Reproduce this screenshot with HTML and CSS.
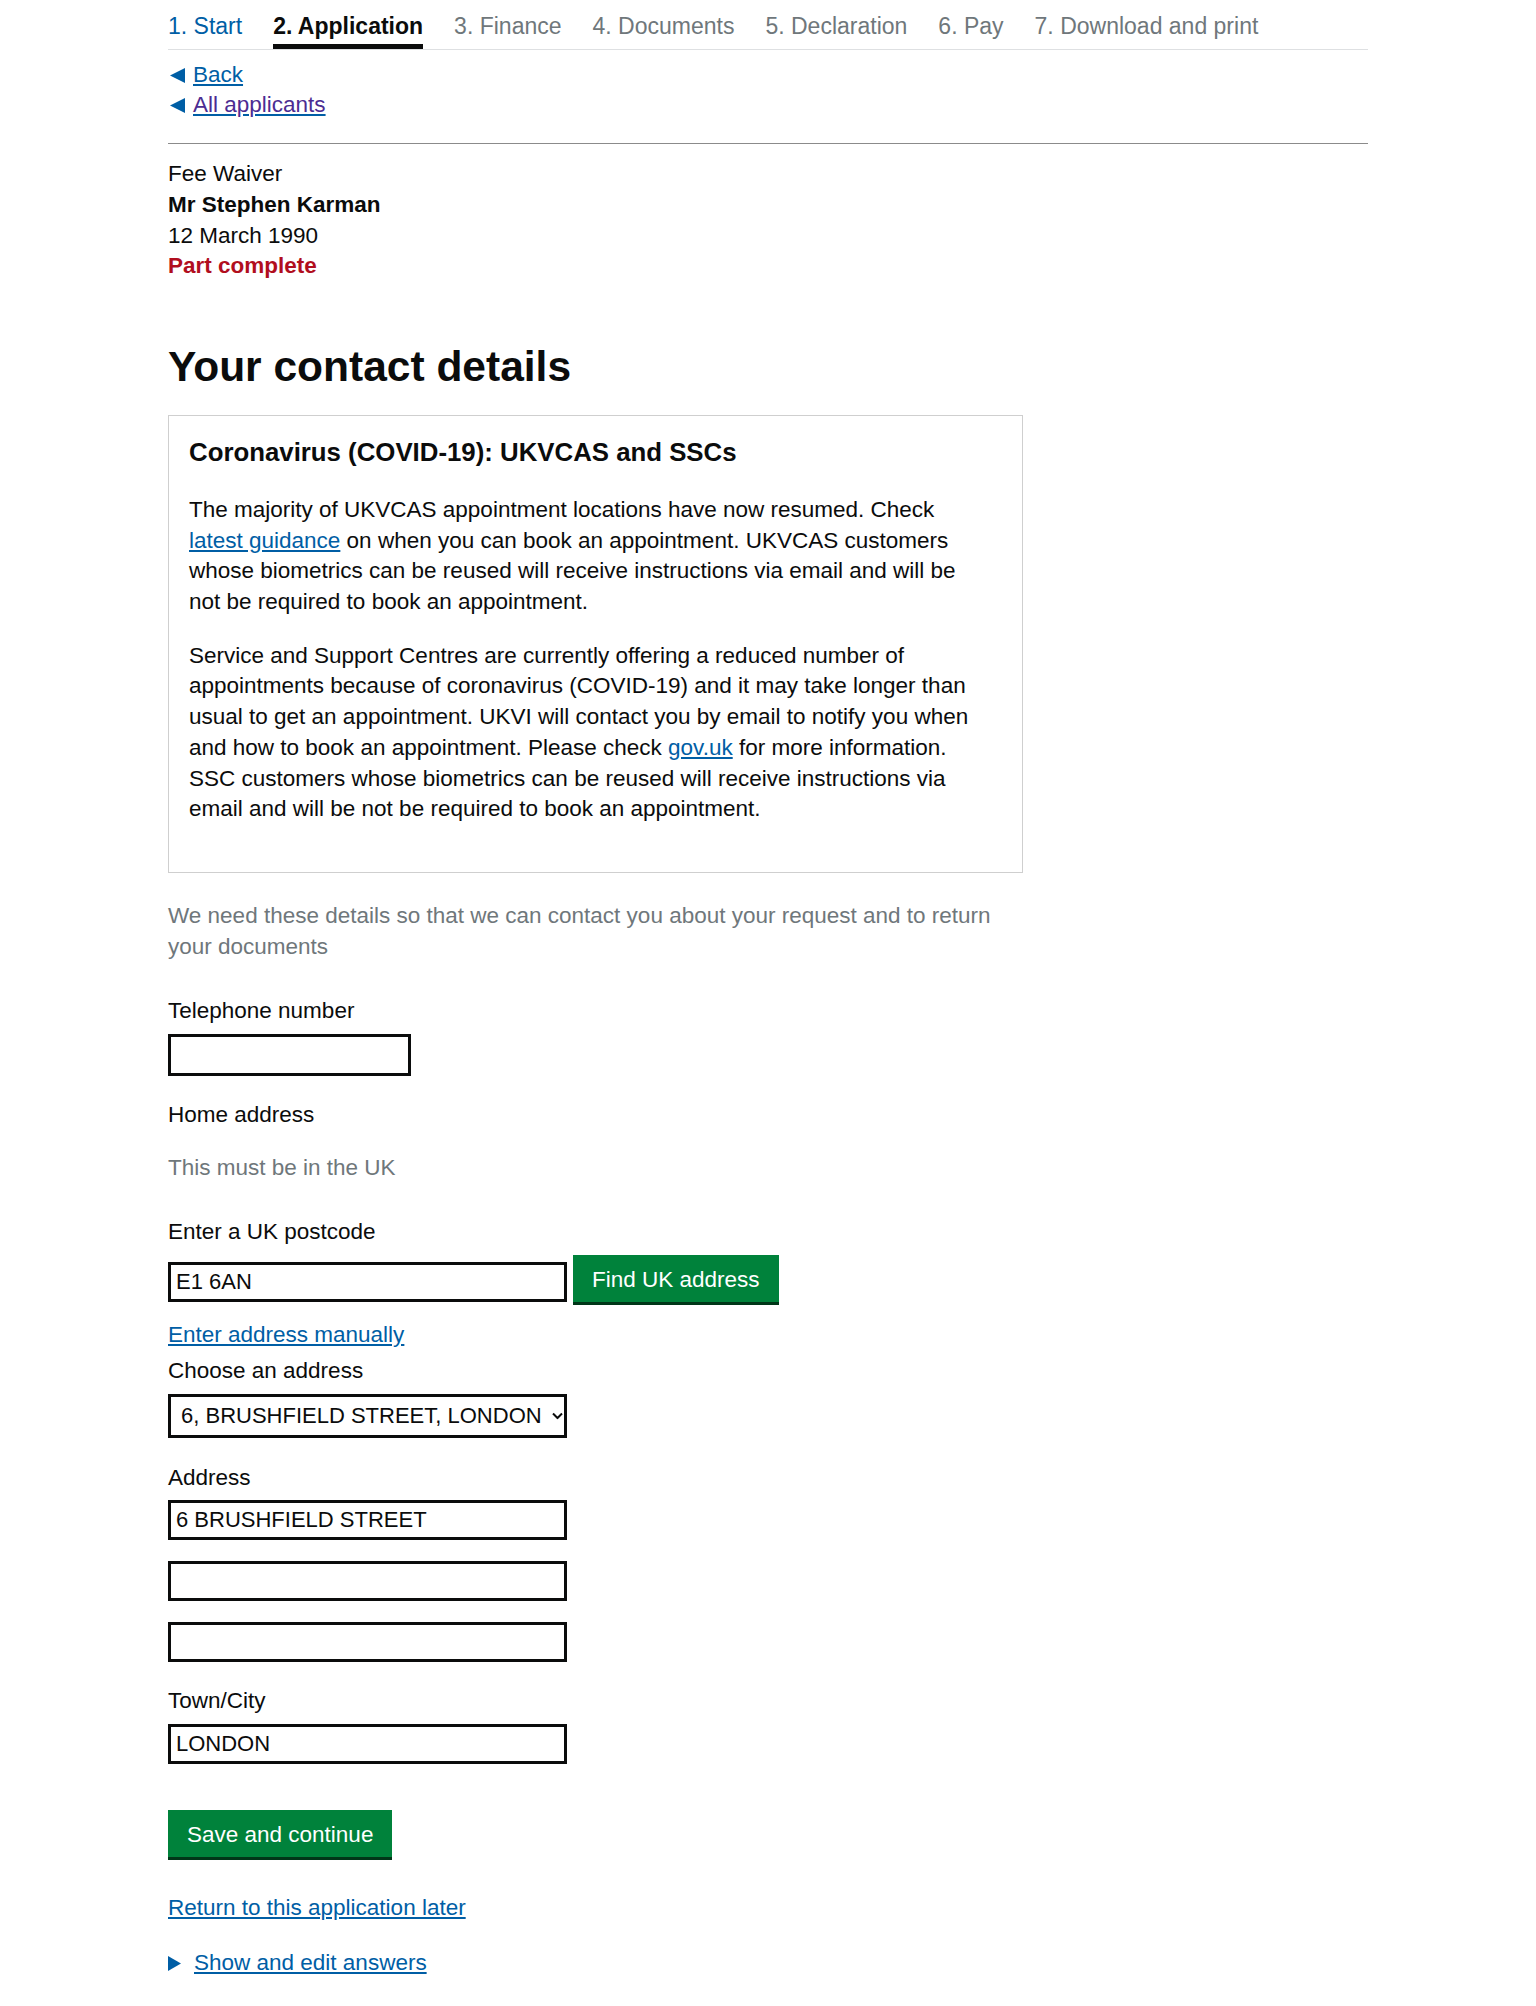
FILE: index.html
```html
<!DOCTYPE html>
<html lang="en">
<head>
    <meta charset="UTF-8">
    <meta name="viewport" content="width=device-width, initial-scale=1.0">
    <title>Your contact details</title>
    <link rel="stylesheet" href="styles.css">
</head>
<body>
    <div class="page">
        <!-- Application steps -->
        <ol class="steps">
            <li class="step"><a href="#">1. Start</a></li>
            <li class="step current">2. Application</li>
            <li class="step">3. Finance</li>
            <li class="step">4. Documents</li>
            <li class="step">5. Declaration</li>
            <li class="step">6. Pay</li>
            <li class="step">7. Download and print</li>
        </ol>

        <div class="back-links">
            <a href="#" class="back-link">
                <svg class="back-arrow" width="15" height="15" viewBox="0 0 15 15"><path d="M0 7.5L15 0V15Z"/></svg>
                <span>Back</span>
            </a>
            <a href="#" class="back-link visited">
                <svg class="back-arrow" width="15" height="15" viewBox="0 0 15 15"><path d="M0 7.5L15 0V15Z"/></svg>
                <span>All applicants</span>
            </a>
        </div>

        <hr class="divider">

        <div class="applicant">
            <div>Fee Waiver</div>
            <div class="applicant-name">Mr Stephen Karman</div>
            <div>12 March 1990</div>
            <div class="status">Part complete</div>
        </div>

        <h1>Your contact details</h1>

        <div class="notice">
            <h2>Coronavirus (COVID-19): UKVCAS and SSCs</h2>
            <p>The majority of UKVCAS appointment locations have now resumed. Check <a href="#">latest guidance</a> on when you can book an appointment. UKVCAS customers whose biometrics can be reused will receive instructions via email and will be not be required to book an appointment.</p>
            <p>Service and Support Centres are currently offering a reduced number of appointments because of coronavirus (COVID-19) and it may take longer than usual to get an appointment. UKVI will contact you by email to notify you when and how to book an appointment. Please check <a href="#">gov.uk</a> for more information. SSC customers whose biometrics can be reused will receive instructions via email and will be not be required to book an appointment.</p>
        </div>

        <p class="intro">We need these details so that we can contact you about your request and to return your documents</p>

        <form class="contact-form">
            <div class="field-phone">
                <label for="phone">Telephone number</label>
                <input type="tel" id="phone" class="input input-phone">
            </div>

            <div class="section-label">Home address</div>
            <p class="hint">This must be in the UK</p>

            <label for="postcode" class="label-postcode">Enter a UK postcode</label>
            <div class="postcode-row">
                <input type="text" id="postcode" class="input input-postcode" value="E1 6AN">
                <button type="button" class="button">Find UK address</button>
            </div>

            <a href="#" class="manual-link">Enter address manually</a>

            <label for="chooseAddress" class="label-choose">Choose an address</label>
            <div class="select-wrap">
                <select id="chooseAddress" class="select">
                    <option>6, BRUSHFIELD STREET, LONDON, E1 6AN</option>
                </select>
                <svg class="chevron" width="11" height="7" viewBox="0 0 11 7"><polyline points="1,1 5.5,5.5 10,1"/></svg>
            </div>

            <label for="address1" class="label-address">Address</label>
            <input type="text" id="address1" class="input input-wide" value="6 BRUSHFIELD STREET">
            <input type="text" id="address2" class="input input-wide input-extra">
            <input type="text" id="address3" class="input input-wide input-extra">

            <label for="town" class="label-town">Town/City</label>
            <input type="text" id="town" class="input input-wide" value="LONDON">

            <button type="submit" class="button button-save">Save and continue</button>
        </form>

        <a href="#" class="later-link">Return to this application later</a>

        <details class="answers">
            <summary>
                <svg class="summary-arrow" width="13" height="15" viewBox="0 0 13 15"><path d="M0 0L13 7.5L0 15Z"/></svg>
                <span>Show and edit answers</span>
            </summary>
        </details>
    </div>
</body>
</html>
```

FILE: styles.css
```css
body {
    margin: 0;
    font-family: "Liberation Sans", Arial, sans-serif;
    font-size: 22.5px;
    line-height: 30.7px;
    color: #0b0c0c;
    background-color: #fff;
}

a {
    color: #005ea5;
}

.page {
    width: 1200px;
    margin: 0 auto;
}

/* steps nav */
.steps {
    list-style: none;
    display: flex;
    gap: 31px;
    margin: 0;
    padding: 0;
    font-size: 23px;
    border-bottom: 1px solid #dee0e2;
}

.step {
    padding: 11px 0 2px;
    border-bottom: 5px solid transparent;
    color: #6f777b;
}

.step a {
    text-decoration: none;
}

.step.current {
    color: #0b0c0c;
    font-weight: bold;
    border-bottom-color: #0b0c0c;
}

/* back links */
.back-links {
    margin-top: 10px;
}

.back-link {
    display: flex;
    align-items: center;
    width: fit-content;
}

.back-link.visited span {
    color: #4c2c92;
}

.back-arrow {
    fill: #005ea5;
    margin-left: 2px;
    margin-right: 8px;
}

.divider {
    border: 0;
    border-top: 1px solid #8b8b8b;
    margin: 22px 0 15px;
}

.applicant-name,
.status {
    font-weight: bold;
}

.status {
    color: #b10e1e;
}

h1 {
    font-size: 42.5px;
    line-height: 50px;
    margin: 60px 0 23px;
}

/* coronavirus notice */
.notice {
    box-sizing: border-box;
    width: 855px;
    border: 1px solid #cfcfcf;
    padding: 21px 32px 47px 20px;
}

.notice h2 {
    font-size: 25.8px;
    line-height: 31px;
    margin: 0 0 27px;
}

.notice p {
    margin: 0 0 23px;
}

.notice p:last-child {
    margin-bottom: 0;
}

.intro {
    width: 855px;
    margin: 28px 0 0;
    color: #6f777b;
}

/* form */
.contact-form label,
.section-label {
    display: block;
}

.contact-form label {
    margin-bottom: 7px;
}

.field-phone {
    margin-top: 34px;
}

.section-label {
    margin-top: 24px;
}

.hint {
    margin: 22px 0 0;
    color: #6f777b;
}

.label-postcode {
    margin-top: 34px;
}

.input {
    display: block;
    box-sizing: border-box;
    height: 40px;
    padding: 0 5px;
    border: 3px solid #0b0c0c;
    border-radius: 0;
    font-family: inherit;
    font-size: 22px;
    color: #0b0c0c;
    background: #fff;
}

.input-phone {
    width: 243px;
    height: 42px;
}

.input-postcode,
.input-wide {
    width: 399px;
}

.postcode-row {
    display: flex;
    align-items: flex-start;
    gap: 6px;
}

.input-postcode {
    margin-top: 7px;
}

.button {
    font: inherit;
    line-height: 30.7px;
    padding: 10px 19px 6.3px;
    border: 0;
    border-radius: 0;
    color: #fff;
    background-color: #00823b;
    box-shadow: 0 3px 0 #003618;
    margin-bottom: 3px;
    cursor: pointer;
}

.manual-link {
    display: block;
    width: fit-content;
    margin-top: 15px;
}

.label-choose {
    margin-top: 5px;
}

.select-wrap {
    position: relative;
    width: 399px;
}

.select {
    appearance: none;
    -webkit-appearance: none;
    display: block;
    box-sizing: border-box;
    width: 399px;
    height: 44px;
    padding: 0 21px 0 10px;
    border: 3px solid #0b0c0c;
    border-radius: 0;
    font-family: inherit;
    font-size: 22px;
    color: #0b0c0c;
    background: #fff;
}

.chevron {
    position: absolute;
    right: 4px;
    top: 50%;
    transform: translateY(-50%);
    fill: none;
    stroke: #0b0c0c;
    stroke-width: 2;
}

.label-address {
    margin-top: 25px;
}

.input-extra {
    margin-top: 21px;
}

.label-town {
    margin-top: 24px;
}

.button-save {
    display: block;
    margin-top: 46px;
}

.later-link {
    display: block;
    width: fit-content;
    margin-top: 36px;
}

.answers {
    margin-top: 24px;
}

.answers summary {
    list-style: none;
    display: flex;
    align-items: center;
    width: fit-content;
    color: #005ea5;
    cursor: pointer;
}

.answers summary::-webkit-details-marker {
    display: none;
}

.answers summary span {
    text-decoration: underline;
}

.summary-arrow {
    fill: #005ea5;
    margin-right: 13px;
}
```
